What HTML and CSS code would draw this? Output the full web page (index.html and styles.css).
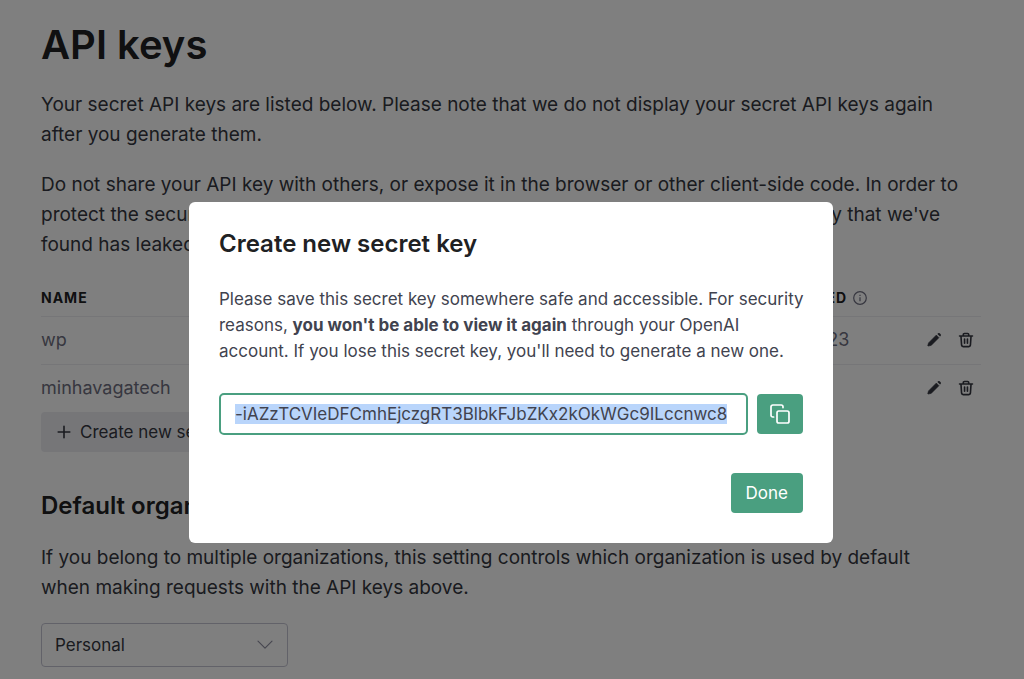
FILE: index.html
```html
<!DOCTYPE html>
<html lang="en">
<head>
  <meta charset="UTF-8">
  <meta name="viewport" content="width=device-width, initial-scale=1.0">
  <title>API keys</title>
  <link rel="stylesheet" href="styles.css">
</head>
<body>
  <!-- Icons used more than once -->
  <svg class="sprite" aria-hidden="true">
    <symbol id="icon-edit" viewBox="0 0 20 20">
      <path d="M12.6 4.5 15.5 7.400 6.900 16 3.400 16.800 3 16.400 3.900 13.200Z" fill="currentColor" stroke="currentColor" stroke-width=".6" stroke-linejoin="round"/>
      <path d="M13.800 3.300 14.500 2.600a1.300 1.300 0 0 1 1.800 0l1.100 1.100a1.300 1.300 0 0 1 0 1.800l-.7.7Z" fill="currentColor"/>
    </symbol>
    <symbol id="icon-trash" viewBox="0 0 20 20">
      <path d="M2.800 5.600h14.400M4.400 5.600l.7 10.200a1.700 1.700 0 0 0 1.700 1.500h6.400a1.700 1.700 0 0 0 1.700-1.500l.7-10.200M7 5.400V4a1.200 1.200 0 0 1 1.200-1.200h3.600A1.200 1.200 0 0 1 13 4v1.400M8.400 9v4.600M11.600 9v4.600" fill="none" stroke="currentColor" stroke-width="1.8" stroke-linecap="round" stroke-linejoin="round"/>
    </symbol>
  </svg>

  <main class="page">
    <h1>API keys</h1>
    <p>Your secret API keys are listed below. Please note that we do not display your secret API keys again<br>after you generate them.</p>
    <p>Do not share your API key with others, or expose it in the browser or other client-side code. In order to<br><span class="line"><span>protect the security of your account</span><span class="line-end">y that we've</span></span><br>found has leaked publicly.</p>

    <table class="keys">
      <thead>
        <tr>
          <th>Name</th>
          <th class="used">
            <span class="th-label">Used
              <svg width="14" height="14" viewBox="0 0 14 14" fill="none" stroke="currentColor" stroke-width="1.2"><circle cx="7" cy="7" r="6.3"/><path d="M7 6.3v4M7 3.7v1.2"/></svg>
            </span>
          </th>
          <th class="actions"></th>
        </tr>
      </thead>
      <tbody>
        <tr>
          <td>wp</td>
          <td class="used">2023</td>
          <td class="actions">
            <div class="action-group">
              <button class="icon-btn" type="button" aria-label="Edit"><svg><use href="#icon-edit"/></svg></button>
              <button class="icon-btn" type="button" aria-label="Delete"><svg><use href="#icon-trash"/></svg></button>
            </div>
          </td>
        </tr>
        <tr>
          <td>minhavagatech</td>
          <td class="used"></td>
          <td class="actions">
            <div class="action-group">
              <button class="icon-btn" type="button" aria-label="Edit"><svg><use href="#icon-edit"/></svg></button>
              <button class="icon-btn" type="button" aria-label="Delete"><svg><use href="#icon-trash"/></svg></button>
            </div>
          </td>
        </tr>
      </tbody>
    </table>

    <button class="btn btn-neutral" type="button">
      <svg width="14" height="14" viewBox="0 0 14 14" stroke="currentColor" stroke-width="1.6" stroke-linecap="round"><path d="M7 1.2v11.6M1.2 7h11.6"/></svg>
      Create new secret key
    </button>

    <h2 id="org-title">Default organization</h2>
    <p>If you belong to multiple organizations, this setting controls which organization is used by default<br>when making requests with the API keys above.</p>
    <div class="select-wrap">
      <select class="select" aria-labelledby="org-title">
        <option>Personal</option>
      </select>
      <svg class="chevron" width="16" height="10" viewBox="0 0 16 10" fill="none" stroke="currentColor" stroke-width="1.2" stroke-linecap="round" stroke-linejoin="round"><path d="M1 1.2l7 7 7-7"/></svg>
    </div>
  </main>

  <!-- Modal -->
  <div class="backdrop">
    <div class="modal" role="dialog" aria-modal="true" aria-labelledby="modal-title">
      <h2 id="modal-title">Create new secret key</h2>
      <p>Please save this secret key somewhere safe and accessible. For security<br>reasons, <strong>you won't be able to view it again</strong> through your OpenAI<br>account. If you lose this secret key, you'll need to generate a new one.</p>
      <div class="key-row">
        <input class="key-input" id="secret-key" type="text" aria-label="Secret key" value="-iAZzTCVIeDFCmhEjczgRT3BlbkFJbZKx2kOkWGc9ILccnwc8" readonly>
        <button class="btn btn-primary btn-copy" type="button" aria-label="Copy">
          <svg width="20" height="20" viewBox="0 0 20 20" fill="none" stroke="currentColor" stroke-width="1.7" stroke-linecap="round" stroke-linejoin="round"><rect x="7" y="7" width="12" height="12" rx="1.8"/><path d="M3.6 13H2.8A1.8 1.8 0 0 1 1 11.2V2.8A1.8 1.8 0 0 1 2.8 1h8.4A1.8 1.8 0 0 1 13 2.8v.8"/></svg>
        </button>
      </div>
      <div class="modal-footer">
        <button class="btn btn-primary" type="button">Done</button>
      </div>
    </div>
  </div>

  <script>
    const keyInput = document.getElementById("secret-key");
    keyInput.focus();
    keyInput.select();
  </script>
</body>
</html>
```
FILE: styles.css
```css
* {
  box-sizing: border-box;
}

body {
  margin: 0;
  background-color: #ffffff;
  color: #353740;
  font-family: Inter, "Liberation Sans", sans-serif;
  font-size: 19px;
  line-height: 30px;
}

.sprite {
  position: absolute;
  width: 0;
  height: 0;
}

.page {
  padding: 20px 43px 10px 41px;
}

h1, h2 {
  margin: 0;
  color: #202123;
  font-weight: 600;
}

h1 {
  margin-bottom: 20px;
  font-size: 40px;
  line-height: 50px;
}

h2 {
  font-size: 24px;
  line-height: 32px;
}

p {
  margin: 0 0 20px;
  white-space: nowrap;
}

.line {
  display: inline-flex;
  justify-content: space-between;
  width: 100%;
  vertical-align: top;
}

.line-end {
  padding-right: 41px;
}

/* Keys table */
.keys {
  width: 100%;
  border-collapse: collapse;
  table-layout: fixed;
}

.keys th {
  height: 36px;
  padding: 0;
  border-bottom: 1px solid #ececf1;
  color: #202123;
  font-size: 14px;
  font-weight: 700;
  line-height: 20px;
  letter-spacing: 1px;
  text-align: left;
  text-transform: uppercase;
}

.keys td {
  height: 48px;
  padding: 0;
  color: #6e6e80;
  font-size: 18px;
}

.keys tbody tr + tr td {
  border-top: 1px solid #ececf1;
}

.keys .used {
  width: 68px;
}

.keys td.used {
  padding-left: 4px;
}

.keys .actions {
  width: 112px;
}

.th-label {
  display: flex;
  justify-content: flex-end;
  align-items: center;
  gap: 6px;
  width: 66px;
}

.th-label svg {
  flex-shrink: 0;
  color: #6e6e80;
}

.action-group {
  display: flex;
  justify-content: flex-end;
  gap: 12px;
  padding-right: 5px;
}

.icon-btn {
  display: flex;
  width: 20px;
  height: 20px;
  padding: 1px;
  border: none;
  background: none;
  color: #353740;
  cursor: pointer;
}

.icon-btn svg {
  width: 18px;
  height: 18px;
}

/* Buttons */
.btn {
  display: inline-flex;
  align-items: center;
  justify-content: center;
  gap: 9px;
  height: 40px;
  padding: 0 15px;
  border: none;
  border-radius: 4px;
  font-family: inherit;
  font-size: 17px;
  line-height: 24px;
  cursor: pointer;
}

.btn-neutral {
  display: flex;
  padding: 0 16px;
  background-color: #ececf1;
  color: #353740;
}

.btn-primary {
  background-color: #4a9f80;
  color: #ffffff;
}

.btn-copy {
  width: 46px;
  padding: 0;
}

.page h2 {
  margin: 38px 0 21px;
}

/* Select */
.select-wrap {
  position: relative;
  width: 247px;
}

.select {
  width: 100%;
  height: 44px;
  padding: 0 13px;
  border: 1px solid #c5c5d2;
  border-radius: 4px;
  appearance: none;
  background: none;
  color: #353740;
  font-family: inherit;
  font-size: 17px;
}

.chevron {
  position: absolute;
  top: 17px;
  right: 15px;
  color: #8e8ea0;
  pointer-events: none;
}

/* Modal */
.backdrop {
  position: fixed;
  inset: 0;
  display: flex;
  justify-content: center;
  align-items: flex-start;
  padding: 202px 20px 20px 18px;
  background-color: rgba(0, 0, 0, 0.5);
}

.modal {
  width: 100%;
  max-width: 644px;
  padding: 26px 30px 30px;
  border-radius: 6px;
  background-color: #ffffff;
}

.modal p {
  margin: 26px 0 29px;
  color: #41434f;
  font-size: 17px;
  line-height: 26px;
}

.key-row {
  display: flex;
  align-items: center;
  gap: 9px;
}

.key-input {
  flex: 1;
  min-width: 0;
  height: 42px;
  padding: 0 14px;
  border: 2px solid #4a9f80;
  border-radius: 5px;
  outline: none;
  color: #41434f;
  font-family: inherit;
  font-size: 17px;
  line-height: 24px;
}

.key-input::selection {
  background-color: #b9d5fb;
  color: #41434f;
}

.modal-footer {
  display: flex;
  justify-content: flex-end;
  margin-top: 38px;
}
```
